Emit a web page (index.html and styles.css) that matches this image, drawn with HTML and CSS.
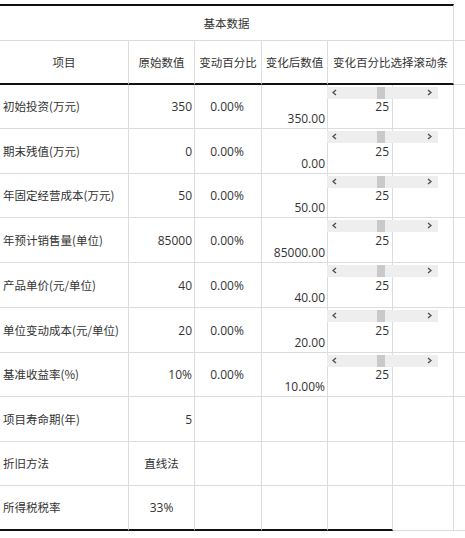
FILE: index.html
```html
<!DOCTYPE html>
<html lang="zh">
<head>
<meta charset="utf-8">
<link rel="stylesheet" href="styles.css">
</head>
<body>
<div class="sheet">
  <div class="c title cn span6">基本数据</div>
  <div class="c edge"></div>

  <div class="c head cn">项目</div>
  <div class="c head cn">原始数值</div>
  <div class="c head cn">变动百分比</div>
  <div class="c head cn">变化后数值</div>
  <div class="c head cn span2">变化百分比选择滚动条</div>
  <div class="c edge"></div>

  <div class="c label cn">初始投资(万元)</div>
  <div class="c num">350</div>
  <div class="c pct">0.00%</div>
  <div class="c res">350.00</div>
  <div class="c ctl"><div class="bar"><svg class="ar l" viewBox="0 0 5 7"><polyline points="4,1 1,3.5 4,6"/></svg><i class="thumb"></i><svg class="ar r" viewBox="0 0 5 7"><polyline points="1,1 4,3.5 1,6"/></svg></div><span class="val">25</span></div>
  <div class="c"></div>
  <div class="c edge"></div>

  <div class="c label cn">期末残值(万元)</div>
  <div class="c num">0</div>
  <div class="c pct">0.00%</div>
  <div class="c res">0.00</div>
  <div class="c ctl"><div class="bar"><svg class="ar l" viewBox="0 0 5 7"><polyline points="4,1 1,3.5 4,6"/></svg><i class="thumb"></i><svg class="ar r" viewBox="0 0 5 7"><polyline points="1,1 4,3.5 1,6"/></svg></div><span class="val">25</span></div>
  <div class="c"></div>
  <div class="c edge"></div>

  <div class="c label cn">年固定经营成本(万元)</div>
  <div class="c num">50</div>
  <div class="c pct">0.00%</div>
  <div class="c res">50.00</div>
  <div class="c ctl"><div class="bar"><svg class="ar l" viewBox="0 0 5 7"><polyline points="4,1 1,3.5 4,6"/></svg><i class="thumb"></i><svg class="ar r" viewBox="0 0 5 7"><polyline points="1,1 4,3.5 1,6"/></svg></div><span class="val">25</span></div>
  <div class="c"></div>
  <div class="c edge"></div>

  <div class="c label cn">年预计销售量(单位)</div>
  <div class="c num">85000</div>
  <div class="c pct">0.00%</div>
  <div class="c res">85000.00</div>
  <div class="c ctl"><div class="bar"><svg class="ar l" viewBox="0 0 5 7"><polyline points="4,1 1,3.5 4,6"/></svg><i class="thumb"></i><svg class="ar r" viewBox="0 0 5 7"><polyline points="1,1 4,3.5 1,6"/></svg></div><span class="val">25</span></div>
  <div class="c"></div>
  <div class="c edge"></div>

  <div class="c label cn">产品单价(元/单位)</div>
  <div class="c num">40</div>
  <div class="c pct">0.00%</div>
  <div class="c res">40.00</div>
  <div class="c ctl"><div class="bar"><svg class="ar l" viewBox="0 0 5 7"><polyline points="4,1 1,3.5 4,6"/></svg><i class="thumb"></i><svg class="ar r" viewBox="0 0 5 7"><polyline points="1,1 4,3.5 1,6"/></svg></div><span class="val">25</span></div>
  <div class="c"></div>
  <div class="c edge"></div>

  <div class="c label cn">单位变动成本(元/单位)</div>
  <div class="c num">20</div>
  <div class="c pct">0.00%</div>
  <div class="c res">20.00</div>
  <div class="c ctl"><div class="bar"><svg class="ar l" viewBox="0 0 5 7"><polyline points="4,1 1,3.5 4,6"/></svg><i class="thumb"></i><svg class="ar r" viewBox="0 0 5 7"><polyline points="1,1 4,3.5 1,6"/></svg></div><span class="val">25</span></div>
  <div class="c"></div>
  <div class="c edge"></div>

  <div class="c label cn">基准收益率(%)</div>
  <div class="c num">10%</div>
  <div class="c pct">0.00%</div>
  <div class="c res">10.00%</div>
  <div class="c ctl"><div class="bar"><svg class="ar l" viewBox="0 0 5 7"><polyline points="4,1 1,3.5 4,6"/></svg><i class="thumb"></i><svg class="ar r" viewBox="0 0 5 7"><polyline points="1,1 4,3.5 1,6"/></svg></div><span class="val">25</span></div>
  <div class="c"></div>
  <div class="c edge"></div>

  <div class="c label cn">项目寿命期(年)</div>
  <div class="c num">5</div>
  <div class="c"></div>
  <div class="c"></div>
  <div class="c"></div>
  <div class="c"></div>
  <div class="c edge"></div>

  <div class="c label cn">折旧方法</div>
  <div class="c mid cn">直线法</div>
  <div class="c"></div>
  <div class="c"></div>
  <div class="c"></div>
  <div class="c"></div>
  <div class="c edge"></div>

  <div class="c label cn last">所得税税率</div>
  <div class="c mid last">33%</div>
  <div class="c last"></div>
  <div class="c last"></div>
  <div class="c last"></div>
  <div class="c"></div>
  <div class="c edge"></div>
</div>
</body>
</html>
```

FILE: styles.css
```css
html, body {
  margin: 0;
  padding: 0;
  background: #ffffff;
}

body {
  font-family: "Open Sans", "Noto Sans CJK SC", sans-serif;
  font-size: 12px;
  color: #333333;
}

.sheet {
  padding-top: 4px;
  display: grid;
  grid-template-columns: 129px 66px 67px 66px 65px 61px 1fr;
  grid-template-rows: 37px 44px 44px 45px 44px 45px 45px 45px 44px 45px 44px 45px;
}

.c {
  box-sizing: border-box;
  border-right: 1px solid #dcdcdc;
  border-bottom: 1px solid #dcdcdc;
  display: flex;
  align-items: center;
  line-height: 15px;
  white-space: nowrap;
  min-width: 0;
}

.cn {
  font-family: "Noto Sans CJK SC", sans-serif;
  font-size: 11.5px;
}

.edge {
  border-right: none;
}

.span6 {
  grid-column: span 6;
}

.span2 {
  grid-column: span 2;
}

.title {
  border-top: 2px solid #111111;
  justify-content: center;
}

.head {
  justify-content: center;
  border-bottom: 2px solid #111111;
}

.label {
  padding-left: 3px;
}

.num {
  justify-content: flex-end;
  padding-right: 2px;
}

.mid {
  justify-content: center;
}

.pct {
  justify-content: center;
  padding-right: 2px;
}

.res {
  justify-content: flex-end;
  align-items: flex-end;
  padding-right: 2px;
  padding-bottom: 2px;
}

.ctl {
  position: relative;
  justify-content: flex-end;
  padding-right: 3px;
}

.val {
  position: relative;
  z-index: 1;
}

.bar {
  position: absolute;
  top: 2px;
  left: -1px;
  width: 111px;
  height: 12px;
  background: #eeeeee;
  z-index: 2;
}

.thumb {
  position: absolute;
  left: 50px;
  top: 0;
  width: 8px;
  height: 12px;
  background: #c9c9c9;
}

.ar {
  position: absolute;
  top: 2px;
  width: 5px;
  height: 7px;
}

.ar polyline {
  fill: none;
  stroke: #505050;
  stroke-width: 1.4;
}

.ar.l {
  left: 5px;
}

.ar.r {
  left: 100px;
}

.last {
  border-bottom: 2px solid #111111;
}
```
